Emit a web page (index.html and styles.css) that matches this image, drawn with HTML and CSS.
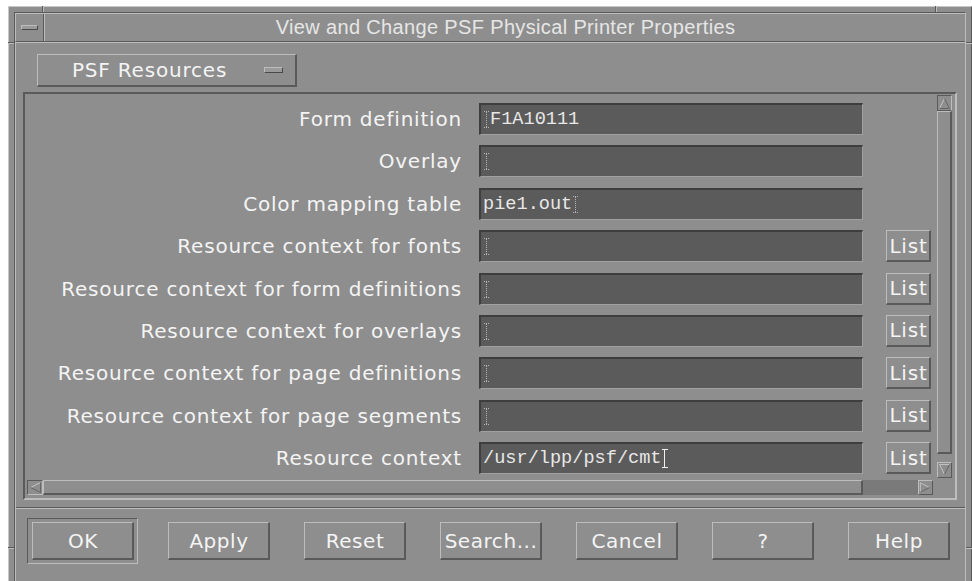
FILE: index.html
```html
<!DOCTYPE html>
<html lang="en">
<head>
<meta charset="utf-8">
<title>View and Change PSF Physical Printer Properties</title>
<link rel="stylesheet" href="styles.css">
</head>
<body>
<div class="window">
  <span class="tick tick-top tick-l"></span>
  <span class="tick tick-top tick-r"></span>
  <span class="tick tick-side tick-lt"></span>
  <span class="tick tick-side tick-rt"></span>
  <span class="tick tick-side tick-lb"></span>
  <span class="tick tick-side tick-rb"></span>
  <span class="tick tick-bottom tick-l"></span>
  <span class="tick tick-bottom tick-r"></span>
  <div class="frame-inner">
    <div class="titlebar">
      <div class="menu-btn"><span class="menu-bar"></span></div>
      <div class="title">View and Change PSF Physical Printer Properties</div>
    </div>
    <div class="dialog">
      <div class="optmenu">
        <span class="optmenu-text">PSF Resources</span>
        <span class="optmenu-ind"></span>
      </div>

      <div class="scrolled">
        <div class="scrolled-inner">
          <div class="viewport">
            <div class="form">
              <div class="row">
                <label class="lbl">Form definition</label>
                <div class="field"><span class="ibeam dotted"></span><span class="val">F1A10111</span></div>
              </div>
              <div class="row">
                <label class="lbl">Overlay</label>
                <div class="field"><span class="ibeam dotted"></span></div>
              </div>
              <div class="row">
                <label class="lbl">Color mapping table</label>
                <div class="field"><span class="val">pie1.out</span><span class="ibeam dotted"></span></div>
              </div>
              <div class="row">
                <label class="lbl">Resource context for fonts</label>
                <div class="field"><span class="ibeam dotted"></span></div>
                <button class="list-btn">List</button>
              </div>
              <div class="row">
                <label class="lbl">Resource context for form definitions</label>
                <div class="field"><span class="ibeam dotted"></span></div>
                <button class="list-btn">List</button>
              </div>
              <div class="row">
                <label class="lbl">Resource context for overlays</label>
                <div class="field"><span class="ibeam dotted"></span></div>
                <button class="list-btn">List</button>
              </div>
              <div class="row">
                <label class="lbl">Resource context for page definitions</label>
                <div class="field"><span class="ibeam dotted"></span></div>
                <button class="list-btn">List</button>
              </div>
              <div class="row">
                <label class="lbl">Resource context for page segments</label>
                <div class="field"><span class="ibeam dotted"></span></div>
                <button class="list-btn">List</button>
              </div>
              <div class="row">
                <label class="lbl">Resource context</label>
                <div class="field"><span class="val">/usr/lpp/psf/cmt</span><span class="ibeam solid"></span></div>
                <button class="list-btn">List</button>
              </div>
            </div>
          </div>

          <div class="vscroll">
            <div class="arrow arrow-up">
              <svg width="13" height="14" viewBox="0 0 13 14"><polyline points="1.5,12.5 6.5,2.5" class="hi"/><polyline points="6.5,2.5 11.5,12.5 1.5,12.5" class="lo"/></svg>
            </div>
            <div class="vthumb"></div>
            <div class="arrow arrow-down">
              <svg width="13" height="14" viewBox="0 0 13 14"><polyline points="1.5,1.5 11.5,1.5" class="hi"/><polyline points="1.5,1.5 6.5,11.5" class="hi"/><polyline points="6.5,11.5 11.5,1.5" class="lo"/></svg>
            </div>
          </div>

          <div class="hscroll">
            <div class="arrow arrow-left">
              <svg width="14" height="13" viewBox="0 0 14 13"><polyline points="12.5,1.5 2.5,6.5" class="hi"/><polyline points="2.5,6.5 12.5,11.5 12.5,1.5" class="lo"/></svg>
            </div>
            <div class="hthumb"></div>
            <div class="htrough"></div>
            <div class="arrow arrow-right">
              <svg width="14" height="13" viewBox="0 0 14 13"><polyline points="1.5,11.5 1.5,1.5 11.5,6.5" class="hi"/><polyline points="11.5,6.5 1.5,11.5" class="lo"/></svg>
            </div>
          </div>
        </div>
      </div>

      <div class="separator"></div>

      <div class="actions">
        <div class="default-ring"><button class="push">OK</button></div>
        <button class="push">Apply</button>
        <button class="push">Reset</button>
        <button class="push">Search...</button>
        <button class="push">Cancel</button>
        <button class="push">?</button>
        <button class="push">Help</button>
      </div>
    </div>
  </div>
</div>
</body>
</html>
```

FILE: styles.css
```css
:root {
  --bg: #8e8e8e;
  --hi: #bdbdbd;
  --lo: #5a5a5a;
  --lo2: #4a4a4a;
  --field: #5b5b5b;
  --trough: #7a7a7a;
  --text: #f4f4f4;
  --ui-font: "DejaVu Sans", "Liberation Sans", Arial, sans-serif;
}

* { box-sizing: border-box; }

html, body {
  margin: 0;
  padding: 0;
  background: #ffffff;
  overflow: hidden;
  width: 972px;
  height: 581px;
}

/* window manager frame */
.window {
  position: relative;
  margin: 6px 0 0 8px;
  width: 964px;
  height: 582px;
  background: var(--bg);
  border-top: 1px solid #c8c8c8;
  border-left: 1px solid #c8c8c8;
  border-right: 1px solid var(--lo);
  border-bottom: 1px solid var(--lo);
  padding: 5px;
  font-family: var(--ui-font);
}

.tick { position: absolute; }
.tick-top, .tick-bottom {
  width: 2px;
  height: 6px;
  border-left: 1px solid var(--lo);
  border-right: 1px solid var(--hi);
}
.tick-top { top: -1px; }
.tick-bottom { bottom: -1px; }
.tick-top.tick-l, .tick-bottom.tick-l { left: 33px; }
.tick-top.tick-r, .tick-bottom.tick-r { left: 926px; }
.tick-side {
  width: 6px;
  height: 2px;
  border-top: 1px solid var(--lo);
  border-bottom: 1px solid var(--hi);
}
.tick-lt, .tick-lb { left: -1px; }
.tick-rt, .tick-rb { right: -1px; }
.tick-lt, .tick-rt { top: 35px; }
.tick-lb, .tick-rb { top: 540px; }

.frame-inner {
  height: 100%;
  display: flex;
  flex-direction: column;
  border-top: 1px solid var(--lo);
  border-left: 1px solid var(--lo);
  border-right: 1px solid var(--hi);
}

/* title bar */
.titlebar {
  height: 29px;
  display: flex;
  border-top: 1px solid var(--hi);
  border-bottom: 1px solid var(--lo);
  border-left: 1px solid var(--hi);
}
.menu-btn {
  width: 28px;
  display: flex;
  align-items: center;
  justify-content: center;
  border-right: 1px solid var(--lo);
}
.menu-bar {
  width: 17px;
  height: 5px;
  background: #9a9a9a;
  border-top: 1px solid var(--hi);
  border-left: 1px solid var(--hi);
  border-bottom: 1px solid var(--lo2);
  border-right: 1px solid var(--lo2);
}
.title {
  flex: 1;
  text-align: center;
  color: #e6e6e6;
  font-family: "Liberation Sans", Arial, sans-serif;
  font-size: 20px;
  letter-spacing: 0.35px;
  line-height: 27px;
  border-left: 1px solid var(--hi);
  padding-left: 1px;
}

/* dialog body */
.dialog {
  flex: 1;
  display: flex;
  flex-direction: column;
  border-top: 1px solid var(--hi);
  border-left: 1px solid var(--hi);
  padding: 11px 0 0 0;
}

.optmenu {
  margin-left: 21px;
  width: 260px;
  height: 33px;
  display: flex;
  align-items: center;
  border-top: 1px solid var(--hi);
  border-left: 1px solid var(--hi);
  border-bottom: 2px solid var(--lo);
  border-right: 2px solid var(--lo);
  padding-left: 34px;
}
.optmenu-text {
  color: var(--text);
  font-size: 20px;
  letter-spacing: 0.8px;
}
.optmenu-ind {
  margin-left: 37px;
  width: 19px;
  height: 6px;
  background: #9a9a9a;
  border-top: 1px solid var(--hi);
  border-left: 1px solid var(--hi);
  border-bottom: 1px solid var(--lo2);
  border-right: 1px solid var(--lo2);
}

/* scrolled window */
.scrolled {
  margin: 5px 0 0 7px;
  width: 934px;
  height: 408px;
  border-top: 2px solid var(--lo);
  border-left: 2px solid var(--lo);
  border-bottom: 2px solid var(--hi);
  border-right: 2px solid var(--hi);
}
.scrolled-inner {
  display: grid;
  grid-template-columns: 906px 15px;
  grid-template-rows: 383px 15px;
  column-gap: 4px;
  row-gap: 2px;
  padding: 1px 3px 3px 2px;
}
.viewport { overflow: hidden; }

.form {
  padding-top: 8px;
  display: flex;
  flex-direction: column;
  gap: 10.375px;
}
.row {
  display: grid;
  grid-template-columns: 434px 384px 45px;
  column-gap: 18px;
  height: 32px;
  align-items: center;
}
.lbl {
  text-align: right;
  color: var(--text);
  font-size: 20px;
  letter-spacing: 0.8px;
  margin-right: -1px;
  white-space: nowrap;
}
.field {
  height: 32px;
  background: var(--field);
  border-top: 2px solid #3e3e3e;
  border-left: 2px solid #3e3e3e;
  border-bottom: 1px solid #a0a0a0;
  border-right: 1px solid #a0a0a0;
  display: flex;
  align-items: center;
  padding-left: 2px;
  font-family: "Liberation Mono", "Courier New", monospace;
  font-size: 18.6px;
  color: #e8e8e8;
  white-space: nowrap;
}
.val { display: inline-block; }

/* text cursor */
.ibeam {
  display: inline-block;
  width: 5px;
  height: 17px;
  margin: 0 1px;
  border-top: 1px solid currentColor;
  border-bottom: 1px solid currentColor;
  background: linear-gradient(to right, transparent 2px, currentColor 2px, currentColor 3px, transparent 3px);
}
.ibeam.dotted {
  color: #b4b4b4;
  border-top-style: dotted;
  border-bottom-style: dotted;
  background: repeating-linear-gradient(to bottom, #b4b4b4 0 1px, transparent 1px 2px);
  background-size: 1px 100%;
  background-repeat: no-repeat;
  background-position: 2px 0;
}
.ibeam.solid {
  color: #f0f0f0;
  width: 6px;
  height: 19px;
  margin-left: 0;
}

.list-btn {
  margin-left: 5px;
  width: 45px;
  height: 32px;
  padding: 0;
  background: var(--bg);
  color: var(--text);
  font-family: var(--ui-font);
  font-size: 20px;
  letter-spacing: 0.8px;
  text-indent: 1px;
  border-top: 1px solid var(--hi);
  border-left: 1px solid var(--hi);
  border-bottom: 2px solid var(--lo);
  border-right: 2px solid var(--lo);
}

/* scroll bars */
.vscroll {
  display: flex;
  flex-direction: column;
  background: var(--bg);
}
.hscroll {
  grid-column: 1;
  display: flex;
  background: var(--bg);
}
.arrow {
  flex: none;
  display: flex;
  align-items: center;
  justify-content: center;
  background: var(--bg);
}
.arrow svg { display: block; }
.arrow .hi { fill: none; stroke: #c2c2c2; stroke-width: 1; }
.arrow .lo { fill: none; stroke: #666666; stroke-width: 1; }
.arrow-up, .arrow-down { height: 16px; width: 15px; }
.arrow-up {
  border-top: 1px solid var(--lo);
  border-left: 1px solid var(--lo);
  border-bottom: 1px solid var(--lo);
  border-right: 1px solid var(--hi);
}
.arrow-down {
  margin-top: auto;
  border-top: 1px solid var(--hi);
  border-left: 1px solid var(--hi);
  border-bottom: 1px solid var(--lo);
  border-right: 1px solid var(--lo);
}
.vthumb {
  height: 343px;
  border-top: 1px solid var(--hi);
  border-left: 1px solid var(--hi);
  border-bottom: 2px solid var(--lo);
  border-right: 2px solid var(--lo);
}
.arrow-left, .arrow-right { width: 16px; height: 15px; }
.arrow-left {
  border-top: 1px solid var(--lo);
  border-left: 1px solid var(--lo);
  border-bottom: 1px solid var(--hi);
  border-right: 1px solid var(--hi);
}
.arrow-right {
  width: 15px;
  border-top: 1px solid var(--hi);
  border-left: 1px solid var(--hi);
  border-bottom: 1px solid var(--lo);
  border-right: 1px solid var(--lo);
}
.hthumb {
  width: 820px;
  border-top: 1px solid var(--hi);
  border-left: 1px solid var(--hi);
  border-bottom: 2px solid var(--lo);
  border-right: 2px solid var(--lo);
}
.htrough {
  flex: 1;
  background: var(--trough);
}

.separator {
  margin-top: 7px;
  height: 2px;
  border-top: 1px solid var(--lo);
  border-bottom: 1px solid var(--hi);
}

/* action buttons */
.actions {
  display: flex;
  justify-content: space-between;
  align-items: center;
  padding: 13px 15px 0 16px;
}
.push {
  width: 102px;
  height: 38px;
  padding: 0;
  background: var(--bg);
  color: var(--text);
  font-family: var(--ui-font);
  font-size: 20px;
  letter-spacing: 0.55px;
  text-indent: 1px;
  border-top: 1px solid var(--hi);
  border-left: 1px solid var(--hi);
  border-bottom: 2px solid var(--lo);
  border-right: 2px solid var(--lo);
}
.default-ring {
  margin: -4px -4px -4px -5px;
  padding: 3px 3px 3px 4px;
  border-top: 1px solid var(--lo);
  border-left: 1px solid var(--lo);
  border-bottom: 1px solid var(--hi);
  border-right: 1px solid var(--hi);
  display: flex;
}
```
